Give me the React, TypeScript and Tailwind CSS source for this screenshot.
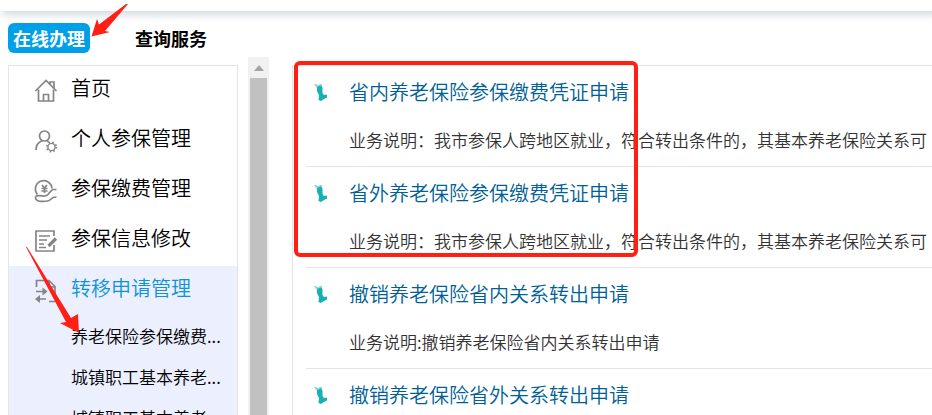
import { ReactNode } from 'react'

interface MenuItem {
  label: string
  icon: ReactNode
  active?: boolean
  children?: string[]
}

interface Service {
  title: string
  description: string
}

const HomeIcon = () => (
  <>
    <path d="M1.5 12 12 1.5 22.5 12" />
    <path d="M4.5 10.5V22h15V10.5" />
    <path d="M16 5V3h4v6" />
    <path d="M9.5 22v-6.5h5V22" />
  </>
)

const PersonIcon = () => (
  <>
    <circle cx="10.5" cy="7" r="5" />
    <path d="M2 21c0-5 2.5-8 6.5-9.500M13 12l2 1" />
    <circle cx="17.500" cy="18" r="3.600" strokeWidth="1.400" />
    <circle cx="17.500" cy="18" r="4.800" strokeWidth="1.600" strokeDasharray="1.600 2.200" />
  </>
)

const PaymentIcon = () => (
  <>
    <path d="M3.500 15.500A8.300 8.300 0 1 1 18 9.500" />
    <path d="m8 6 2.500 3L13 6M7.500 9.500h6M7.500 12h6M10.500 9v5" />
    <path d="M22.500 10.500h-3c-2 0-3 2-5 4.500-1.500 2-3 2.500-6 2-3-.5-5.500-1-7 .5" />
    <path d="M1.500 17.500c-.5 3 2 5 5.500 4.800 6 0 7.500.2 10-2.300 1.500-1.500 3-2 5.500-2" />
  </>
)

const EditIcon = () => (
  <>
    <path d="M20 7V2H2v20h18v-6" />
    <path d="M5 7h11M5 11h8M5 15h5M5 18.500h7" />
    <path d="m14.500 17 7.500-7.500" strokeWidth="3.200" />
  </>
)

const TransferIcon = () => (
  <>
    <path d="M2.500 8V1.500H15l6 6V17M15 2v6h6" />
    <path d="M2 12.500h9M21 22.500h-6M4 20h8" />
    <path d="m8.500 8.500 5 4-5 4zM6 16l-5 4 5 4z" fill="currentColor" stroke="none" />
  </>
)

const menu: MenuItem[] = [
  { label: '首页', icon: <HomeIcon /> },
  { label: '个人参保管理', icon: <PersonIcon /> },
  { label: '参保缴费管理', icon: <PaymentIcon /> },
  { label: '参保信息修改', icon: <EditIcon /> },
  {
    label: '转移申请管理',
    icon: <TransferIcon />,
    active: true,
    children: ['养老保险参保缴费...', '城镇职工基本养老...', '城镇职工基本养老...'],
  },
]

const transferNote =
  '业务说明：我市参保人跨地区就业，符合转出条件的，其基本养老保险关系可'

const services: Service[] = [
  { title: '省内养老保险参保缴费凭证申请', description: transferNote },
  { title: '省外养老保险参保缴费凭证申请', description: transferNote },
  {
    title: '撤销养老保险省内关系转出申请',
    description: '业务说明:撤销养老保险省内关系转出申请',
  },
  {
    title: '撤销养老保险省外关系转出申请',
    description: '业务说明:撤销养老保险省外关系转出申请',
  },
]

function Sidebar() {
  return (
    <nav className="w-[230px] shrink-0 border border-[#e5e5e5] mt-2">
      <ul>
        {menu.map((item) => (
          <li key={item.label} className={item.active ? 'bg-[#ebeffe]' : ''}>
            <a
              href="#"
              className={`flex h-[50px] items-center gap-3.5 pl-[26px] text-xl ${
                item.active ? 'text-[#0f93d8]' : 'text-black'
              }`}
            >
              <svg
                viewBox="1 1 22 22"
                className="size-[22px] shrink-0 overflow-visible text-[#858585]"
                fill="none"
                stroke="currentColor"
                strokeWidth="1.7"
              >
                {item.icon}
              </svg>
              <span className="pb-1.5">{item.label}</span>
            </a>
            {item.children && (
              <ul>
                {item.children.map((child, i) => (
                  <li key={i}>
                    <a
                      href="#"
                      className="flex h-[41px] items-center pb-0.5 pl-[62px] text-[17px] whitespace-nowrap text-black"
                    >
                      {child}
                    </a>
                  </li>
                ))}
              </ul>
            )}
          </li>
        ))}
      </ul>
    </nav>
  )
}

function ScrollRail() {
  return (
    <div className="ml-2.5 flex w-[21px] shrink-0 flex-col items-center bg-[#f1f1f1]">
      <div className="flex h-[21px] items-center">
        <svg viewBox="0 0 10 6" className="h-[6px] w-[10px]" fill="#a3a3a3">
          <path d="M0 6 5 0l5 6z" />
        </svg>
      </div>
      <div className="w-[17px] flex-1 bg-[#c1c1c1]" />
    </div>
  )
}

function ServiceRow({ service }: { service: Service }) {
  return (
    <li className="flex h-[101px] shrink-0 gap-[21px] border-b border-[#e5e5e5] pl-2">
      <svg viewBox="0 0 14 18" className="mt-[17px] h-[18px] w-3.5 shrink-0">
        <path d="M0 1h2l2 1.500L6 1h2v3L5 6 2 4z" fill="#8ad8da" />
        <path d="M3 4l4-1.500 1.500 2V10l1.500 2 3-.5v3l-3 1.500-3 2-2.500-1 .5-5L3 8z" fill="#17b0b3" />
      </svg>
      <div className="whitespace-nowrap">
        <a href="#" className="block pt-3 text-xl text-[#005f96]">
          {service.title}
        </a>
        <p className="pt-5 text-[17px] leading-7 text-[#333]">{service.description}</p>
      </div>
    </li>
  )
}

function Annotations() {
  return (
    <div className="pointer-events-none absolute inset-0">
      <div className="absolute top-[61px] left-[294px] h-[196px] w-[344px] rounded-md border-4 border-[#ff1f14]" />
      <svg width="140" height="340" className="absolute top-0 left-0" fill="#ff1f14">
        <path d="M126 4h2L105 31l5 1-18.500 4.500L97 19l2 5.500z" />
        <path d="M26 247h1l44 71 7-4 1 19-19-10 6-1z" />
      </svg>
    </div>
  )
}

export default function App() {
  return (
    <div className="relative flex h-screen flex-col overflow-hidden bg-white font-['Noto_Sans_CJK_SC',sans-serif] font-[350]">
      <header className="h-[11px] shrink-0 bg-white shadow-[4px_2px_9px_2px_#d5d9e0]" />
      <div className="flex items-center gap-10 pt-3 pl-2 text-lg font-bold">
        <button className="h-[30px] rounded-md bg-[#00a0e9] px-[5px] leading-[30px] text-white">
          在线办理
        </button>
        <button className="h-[30px] px-[5px] leading-[30px] text-black">查询服务</button>
      </div>
      <div className="flex min-h-0 flex-1 pt-1 pl-2">
        <Sidebar />
        <ScrollRail />
        <main className="mt-2 ml-[23px] min-w-0 flex-1 overflow-hidden border-t border-l border-[#e5e5e5] pl-[13px]">
          <ul>
            {services.map((service) => (
              <ServiceRow key={service.title} service={service} />
            ))}
          </ul>
        </main>
      </div>
      <Annotations />
    </div>
  )
}
